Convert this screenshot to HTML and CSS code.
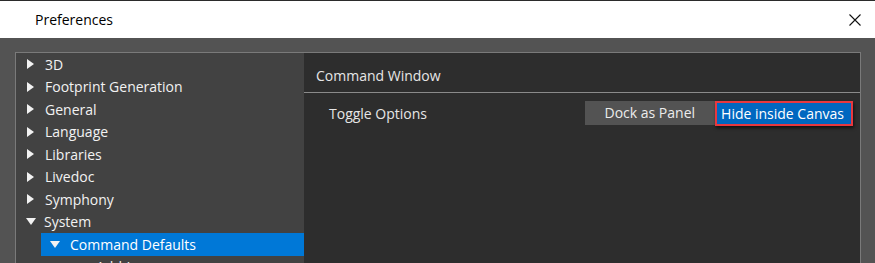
FILE: index.html
```html
<!DOCTYPE html>
<html>

<head>
  <meta charset="UTF-8">
  <title>Preferences</title>
  <link rel="stylesheet" href="styles.css">
</head>

<body>
  <div class="titlebar">
    <span class="title">Preferences</span>
    <svg class="close" width="12" height="12" viewBox="0 0 12 12">
      <path d="M0.5 0.5 L11.5 11.5 M11.5 0.5 L0.5 11.5" stroke="#111" stroke-width="1.1" fill="none" />
    </svg>
  </div>

  <div class="content">
    <div class="frame">
      <div class="tree">
        <div class="node"><span class="tri right"></span>3D</div>
        <div class="node"><span class="tri right"></span>Footprint Generation</div>
        <div class="node"><span class="tri right"></span>General</div>
        <div class="node"><span class="tri right"></span>Language</div>
        <div class="node"><span class="tri right"></span>Libraries</div>
        <div class="node"><span class="tri right"></span>Livedoc</div>
        <div class="node"><span class="tri right"></span>Symphony</div>
        <div class="node"><span class="tri down"></span>System</div>
        <div class="node child selected"><span class="tri down"></span>Command Defaults</div>
        <div class="node leaf">Add-Ins</div>
      </div>

      <div class="panel">
        <div class="panel-head">Command Window</div>
        <div class="option-row">
          <span class="option-label">Toggle Options</span>
          <div class="toggle">
            <span class="tbtn">Dock as Panel</span>
            <span class="tbtn active">Hide inside Canvas</span>
          </div>
        </div>
      </div>
    </div>
  </div>
</body>

</html>
```

FILE: styles.css
```css
html,
body {
  margin: 0;
  padding: 0;
}

body {
  width: 875px;
  height: 263px;
  overflow: hidden;
  background-color: #535353;
  font-family: "Open Sans", "Noto Sans", sans-serif;
  font-size: 14px;
}

.titlebar {
  height: 37px;
  border-top: 1px solid #2b2b2b;
  background-color: #ffffff;
  display: flex;
  align-items: center;
  justify-content: space-between;
  padding: 0 14px 0 35px;
}

.title {
  color: #000;
  font-size: 14px;
}

.close {
  display: block;
}

.content {
  padding: 14px 0 0 15px;
}

.frame {
  width: 844px;
  height: 210px;
  border: 1px solid #7a7a7a;
  border-bottom: none;
  display: flex;
  overflow: hidden;
}

.tree {
  width: 288px;
  background-color: #424242;
  color: #f2f2f2;
}

.node {
  height: 22.5px;
  display: flex;
  align-items: center;
  padding-left: 11px;
  white-space: nowrap;
}

.node.child {
  margin-left: 25px;
  padding-left: 9px;
}

.node.leaf {
  padding-left: 80px;
}

.selected {
  background-color: #0078d7;
  color: #fff;
}

.tri {
  display: inline-block;
  width: 0;
  height: 0;
  margin-right: 11px;
}

.tri.right {
  border-top: 5px solid transparent;
  border-bottom: 5px solid transparent;
  border-left: 7px solid #f2f2f2;
}

.tri.down {
  border-left: 5px solid transparent;
  border-right: 5px solid transparent;
  border-top: 7px solid #f2f2f2;
  margin-right: 8px;
  margin-left: -1px;
}

.node.child .tri.down {
  margin-left: 0;
  margin-right: 10px;
}

.panel {
  flex: 1;
  background-color: #2d2d2d;
  color: #e6e6e6;
}

.panel-head {
  height: 40px;
  box-sizing: border-box;
  border-bottom: 1px solid #8a8a8a;
  padding: 6px 0 0 12px;
  display: flex;
  align-items: center;
}

.option-row {
  display: flex;
  align-items: center;
  justify-content: space-between;
  padding: 8px 7px 0 25px;
}

.toggle {
  display: flex;
}

.tbtn {
  height: 24px;
  line-height: 24px;
  padding: 0 20px;
  background-color: #535353;
  color: #ececec;
}

.tbtn.active {
  background-color: #0067c0;
  color: #fff;
  padding: 0 7px 0 4px;
  height: 21px;
  line-height: 21px;
  border: 2px solid #e8383f;
  box-shadow: 1px 2px 3px rgba(0, 0, 0, 0.6);
}
```
